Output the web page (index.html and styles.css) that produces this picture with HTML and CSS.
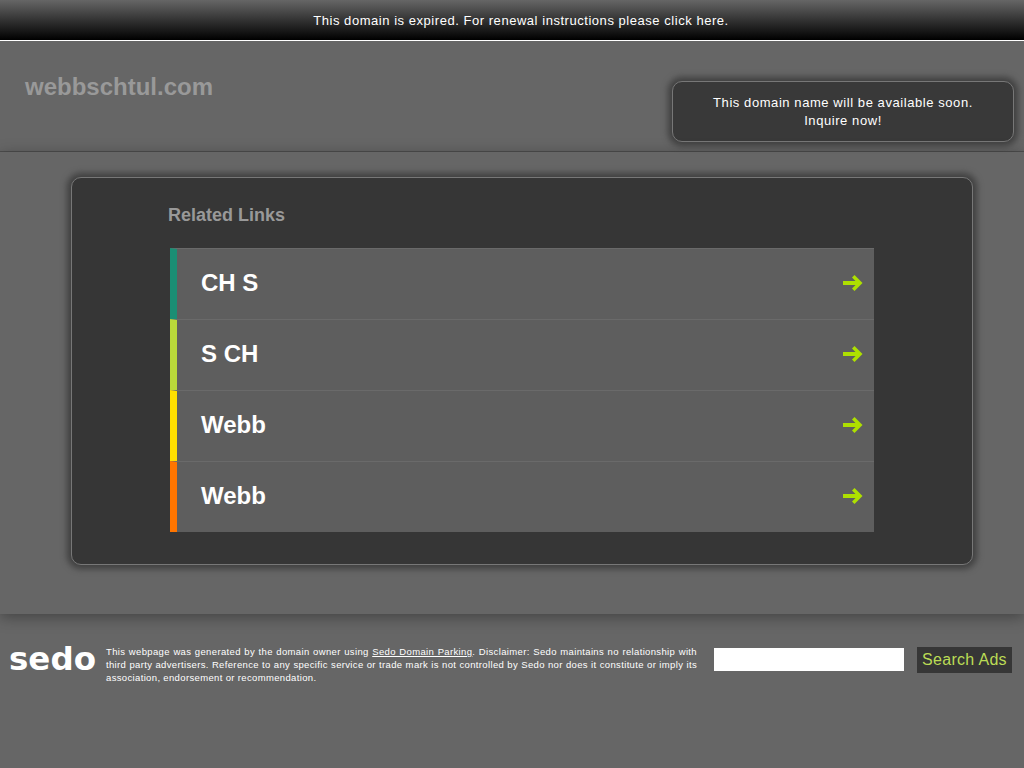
FILE: index.html
```html
<!DOCTYPE html>
<html lang="en">
<head>
  <meta charset="UTF-8" />
  <title>webbschtul.com</title>
  <link rel="stylesheet" href="styles.css">
</head>
<body>
  <div class="topbar">This domain is expired. For renewal instructions please click here.</div>

  <div class="header">
    <h1 class="domain">webbschtul.com</h1>
    <div class="inquire">This domain name will be available soon.<br>Inquire now!</div>
  </div>

  <div class="main">
    <div class="panel">
      <h2 class="panel-title">Related Links</h2>
      <div class="links">
        <a class="link link-teal" href="#"><span>CH S</span>
          <svg class="arrow" viewBox="0 0 20 16"><path d="M0 6h12.5L9 2.500 11.500 0 19.500 8 11.500 16 9 13.500 12.500 10H0z"/></svg></a>
        <a class="link link-lime" href="#"><span>S CH</span>
          <svg class="arrow" viewBox="0 0 20 16"><path d="M0 6h12.5L9 2.500 11.500 0 19.500 8 11.500 16 9 13.500 12.500 10H0z"/></svg></a>
        <a class="link link-yellow" href="#"><span>Webb</span>
          <svg class="arrow" viewBox="0 0 20 16"><path d="M0 6h12.5L9 2.500 11.500 0 19.500 8 11.500 16 9 13.500 12.500 10H0z"/></svg></a>
        <a class="link link-orange" href="#"><span>Webb</span>
          <svg class="arrow" viewBox="0 0 20 16"><path d="M0 6h12.5L9 2.500 11.500 0 19.500 8 11.500 16 9 13.500 12.500 10H0z"/></svg></a>
      </div>
    </div>
  </div>

  <div class="footer">
    <div class="logo">sedo</div>
    <p class="disclaimer">This webpage was generated by the domain owner using <a href="#">Sedo Domain Parking</a>. Disclaimer: Sedo maintains no relationship with third party advertisers. Reference to any specific service or trade mark is not controlled by Sedo nor does it constitute or imply its association, endorsement or recommendation.</p>
    <form class="search">
      <input class="search-input" type="text">
      <button class="search-btn" type="button">Search Ads</button>
    </form>
  </div>
</body>
</html>
```

FILE: styles.css
```css
body {
  margin: 0;
  height: 768px;
  overflow: hidden;
  background: #666;
  font-family: "Liberation Sans", Arial, sans-serif;
  color: #fff;
}

/* TOP BAR */
.topbar {
  height: 40px;
  line-height: 41px;
  padding-left: 18px;
  border-bottom: 1px solid #fff;
  background: linear-gradient(#666, #000);
  text-align: center;
  font-size: 13px;
  letter-spacing: 0.54px;
}

/* HEADER */
.header {
  height: 110px;
  border-bottom: 1px solid #4e4e4e;
  display: flex;
  justify-content: space-between;
  padding: 0 10px 0 25px;
}
.domain {
  margin: 32px 0 0;
  font-size: 24px;
  line-height: 27px;
  color: #999;
}
.inquire {
  width: 340px;
  height: 47px;
  margin-top: 40px;
  padding-top: 12px;
  border: 1px solid #777;
  border-radius: 10px;
  background: #393939;
  box-shadow: 0 0 6px 4px #404040;
  text-align: center;
  font-size: 13px;
  line-height: 18px;
  letter-spacing: 0.57px;
}

/* MAIN PANEL */
.main {
  height: 462px;
  padding-top: 25px;
  box-sizing: border-box;
  box-shadow: 0 3px 14px rgba(0,0,0,0.35);
  position: relative;
}
.panel {
  width: 900px;
  height: 385px;
  margin-left: 71px;
  padding-top: 1px;
  border: 1px solid #777;
  border-radius: 10px;
  background: #363636;
  box-shadow: 0 0 6px 4px #404040;
}
.panel-title {
  margin: 26px 0 0 96px;
  font-size: 18px;
  line-height: 21px;
  color: #999;
}
.links {
  width: 704px;
  margin: 22px 0 0 98px;
}
.link {
  height: 68px;
  padding: 0 11px 2px 24px;
  border-top: 1px solid #6a6a6a;
  border-left: 7px solid;
  background: #5e5e5e;
  display: flex;
  align-items: center;
  justify-content: space-between;
  color: #fff;
  text-decoration: none;
  font-size: 24px;
  font-weight: bold;
}
.link-teal { border-left-color: #1b8e74; }
.link-lime { border-left-color: #b9d93a; }
.link-yellow { border-left-color: #ffdf00; }
.link-orange { border-left-color: #ff7500; }
.arrow {
  width: 20px;
  height: 16px;
  fill: #aee000;
}

/* FOOTER */
.footer {
  display: flex;
  padding-left: 9px;
}
.logo {
  width: 97px;
  margin-top: 21px;
  font-family: "DejaVu Sans", sans-serif;
  font-weight: bold;
  font-size: 32.5px;
  line-height: 48px;
}
.disclaimer {
  width: 591px;
  margin: 31px 0 0;
  font-size: 9.5px;
  line-height: 13px;
  text-align: justify;
  letter-spacing: 0.35px;
}
.disclaimer a {
  color: #fff;
}
.search {
  display: flex;
  align-items: flex-start;
  margin: 33px 0 0 17px;
}
.search-input {
  width: 190px;
  height: 23px;
  box-sizing: border-box;
  margin: 1px 0 0;
  padding: 0;
  border: 0;
  background: #fff;
}
.search-btn {
  width: 95px;
  height: 26px;
  margin-left: 13px;
  padding: 0;
  border: 0;
  background: #363636;
  color: #bbdc55;
  font-family: "Liberation Sans", Arial, sans-serif;
  font-size: 16px;
  letter-spacing: 0.3px;
}
```
